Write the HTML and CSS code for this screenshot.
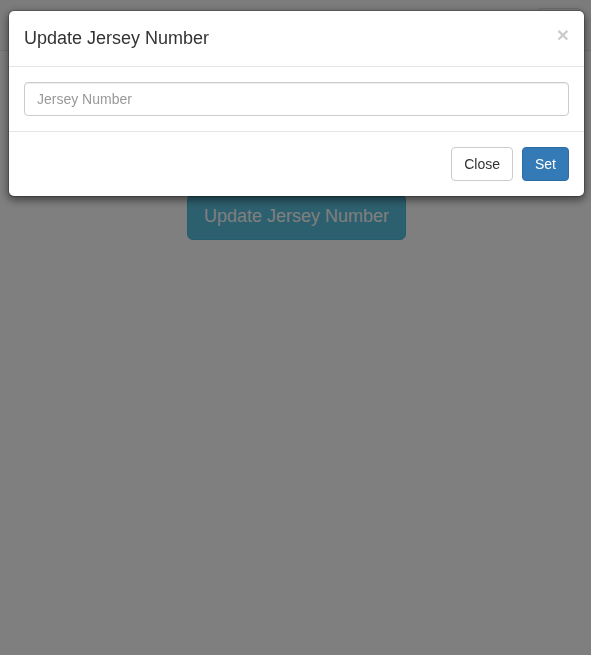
FILE: index.html
```html
<!DOCTYPE html>
<html lang="en">
<head>
<meta charset="utf-8">
<title>Update Jersey Number</title>
<link rel="stylesheet" href="styles.css">
</head>
<body>
<nav class="navbar">
  <button class="navbar-toggle" type="button">
    <span class="icon-bar"></span>
    <span class="icon-bar"></span>
    <span class="icon-bar"></span>
  </button>
</nav>
<main class="page">
  <button class="btn btn-lg btn-info" type="button">Update Jersey Number</button>
</main>

<div class="modal-backdrop"></div>
<div class="modal">
  <div class="modal-content">
    <div class="modal-header">
      <h4 class="modal-title">Update Jersey Number</h4>
      <button type="button" class="close" aria-label="Close">&times;</button>
    </div>
    <div class="modal-body">
      <input class="form-control" type="text" placeholder="Jersey Number">
    </div>
    <div class="modal-footer">
      <button type="button" class="btn btn-default btn-footer">Close</button>
      <button type="button" class="btn btn-primary btn-footer">Set</button>
    </div>
  </div>
</div>
</body>
</html>
```

FILE: styles.css
```css
* { box-sizing: border-box; }
html, body { margin: 0; padding: 0; }
body {
  font-family: "Liberation Sans", Arial, Helvetica, sans-serif;
  font-size: 14px;
  line-height: 1.42857;
  color: #333;
  background: #fff;
  height: 655px;
  overflow: hidden;
}

.navbar {
  height: 51px;
  background: #f8f8f8;
  border-bottom: 1px solid #e7e7e7;
  display: flex;
  justify-content: flex-end;
  padding: 8px 10px 0 0;
}
.navbar-toggle {
  width: 44px;
  height: 34px;
  border: 1px solid #ddd;
  border-radius: 4px;
  background: transparent;
  padding: 9px 10px;
  display: flex;
  flex-direction: column;
  gap: 4px;
}
.icon-bar {
  display: block;
  width: 22px;
  height: 2px;
  border-radius: 1px;
  background: #888;
}

.page {
  display: flex;
  justify-content: center;
  padding: 143px 0 0 2px;
}

.btn {
  display: inline-block;
  font-family: inherit;
  font-size: 14px;
  line-height: 1.42857;
  padding: 6px 12px;
  border: 1px solid transparent;
  border-radius: 4px;
  cursor: pointer;
  white-space: nowrap;
  margin: 0;
}
.btn-footer {
  padding: 7px 12px 5px;
}
.btn-lg {
  font-size: 18px;
  line-height: 1.3333;
  padding: 10px 16px;
  border-radius: 6px;
}
.btn-info {
  color: #fff;
  background: #5bc0de;
  border-color: #46b8da;
}
.btn-default {
  color: #333;
  background: #fff;
  border-color: #ccc;
}
.btn-primary {
  color: #fff;
  background: #337ab7;
  border-color: #2e6da4;
}

.modal-backdrop {
  position: fixed;
  inset: 0;
  background: rgba(0, 0, 0, 0.5);
}
.modal {
  position: fixed;
  top: 10px;
  left: 8px;
  width: 577px;
}
.modal-content {
  background: #fff;
  border: 1px solid rgba(0, 0, 0, 0.2);
  border-radius: 6px;
  box-shadow: 0 3px 9px rgba(0, 0, 0, 0.5);
  background-clip: padding-box;
}
.modal-header {
  display: flex;
  justify-content: space-between;
  align-items: flex-start;
  padding: 15px 15px 14px 15px;
  border-bottom: 1px solid #e5e5e5;
}
.modal-title {
  margin: 0;
  font-size: 18px;
  font-weight: 500;
  line-height: 1.42857;
  color: #333;
}
.close {
  margin-top: -2px;
  padding: 0;
  border: 0;
  background: transparent;
  font-family: inherit;
  font-size: 21px;
  font-weight: 700;
  line-height: 1;
  color: #000;
  opacity: 0.2;
  text-shadow: 0 1px 0 #fff;
  cursor: pointer;
}
.modal-body {
  padding: 15px;
}
.form-control {
  display: block;
  width: 100%;
  height: 34px;
  padding: 6px 12px;
  font-family: inherit;
  font-size: 14px;
  line-height: 1.42857;
  color: #555;
  background: #fff;
  border: 1px solid #ccc;
  border-radius: 4px;
  box-shadow: inset 0 1px 1px rgba(0, 0, 0, 0.075);
  outline: none;
}
.form-control::placeholder { color: #999; }
.modal-footer {
  display: flex;
  justify-content: flex-end;
  gap: 9px;
  padding: 15px;
  border-top: 1px solid #e5e5e5;
}
```
